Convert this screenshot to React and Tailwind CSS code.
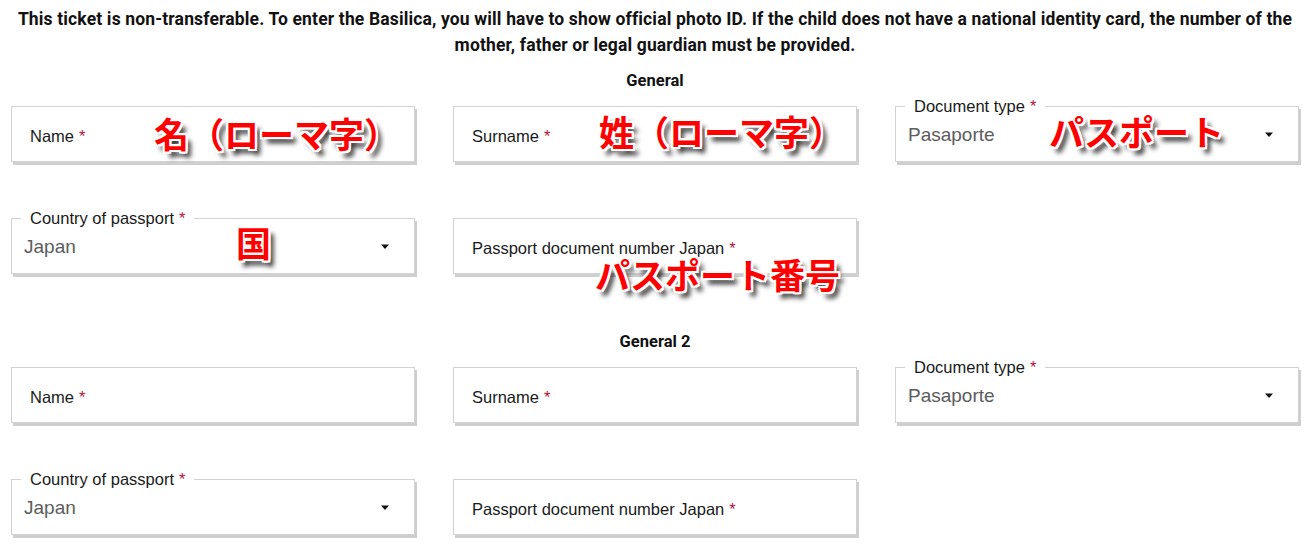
const NOTE =
  "absolute font-bold text-[#ff0000] text-[35px] leading-none whitespace-nowrap [font-family:'Noto_Sans_CJK_JP',sans-serif] [text-shadow:2px_0_0_#fff,-2px_0_0_#fff,0_2px_0_#fff,0_-2px_0_#fff,2px_2px_0_#fff,-2px_-2px_0_#fff,2px_-2px_0_#fff,-2px_2px_0_#fff,5px_6px_5px_rgba(0,0,0,0.85)]";

function Req() {
  return <span className="text-[#b3123b] ml-[5px]">*</span>;
}

function Caret() {
  return (
    <svg width="10" height="6" viewBox="0 0 10 6" className="shrink-0">
      <path d="M1 0.5h8L5 5z" fill="#111" />
    </svg>
  );
}

function TextField({ label }) {
  return (
    <div className="h-[56px] bg-white border border-[#d2d2d2] shadow-[2px_3px_0_#cfcfcf] flex items-center pl-[18px] pt-[4px] text-[16.5px] text-[#1a1a1a] [font-family:'Liberation_Sans',Arial,sans-serif]">
      {label}
      <Req />
    </div>
  );
}

function SelectField({ label, value }) {
  return (
    <div className="relative h-[56px] bg-white border border-[#d2d2d2] shadow-[2px_3px_0_#cfcfcf] flex items-center justify-between pl-[12px] pr-[24px] pt-[2px] [font-family:'Liberation_Sans',Arial,sans-serif]">
      <span className="absolute -top-[12px] left-[9px] bg-white px-[9px] text-[16.5px] leading-[22px] text-[#1a1a1a]">
        {label}
        <Req />
      </span>
      <span className="text-[19px] text-[#5c5c5c]">{value}</span>
      <Caret />
    </div>
  );
}

function Section({ title, top }) {
  return (
    <>
      <h2 className={`text-center font-bold text-[16.5px] leading-[20px] text-[#111] ${top}`}>{title}</h2>
      <div className="grid grid-cols-[404px_404px_404px] gap-x-[38px] gap-y-[56px] px-[11px] mt-[15px]">
        <TextField label="Name" />
        <TextField label="Surname" />
        <SelectField label="Document type" value="Pasaporte" />
        <SelectField label="Country of passport" value="Japan" />
        <TextField label="Passport document number Japan" />
      </div>
    </>
  );
}

export default function App() {
  return (
    <div className="relative w-[1310px] h-[546px] overflow-hidden bg-white [font-family:Roboto,'Liberation_Sans',sans-serif]">
      <p className="pt-[6px] px-[3px] text-center font-bold text-[17.5px] leading-[26px] text-[#111] tracking-[0.15px]">
        This ticket is non-transferable. To enter the Basilica, you will have to show official photo ID. If the child does not have a national identity card, the number of the mother, father or legal guardian must be provided.
      </p>
      <Section title="General" top="mt-[13px]" />
      <Section title="General 2" top="mt-[58px]" />

      <span className={`${NOTE} left-[154px] top-[115px]`}>名（ローマ字）</span>
      <span className={`${NOTE} left-[599px] top-[113px]`}>姓（ローマ字）</span>
      <span className={`${NOTE} left-[1049px] top-[113px]`}>パスポート</span>
      <span className={`${NOTE} left-[236px] top-[224px]`}>国</span>
      <span className={`${NOTE} left-[595px] top-[256px]`}>パスポート番号</span>
    </div>
  );
}
